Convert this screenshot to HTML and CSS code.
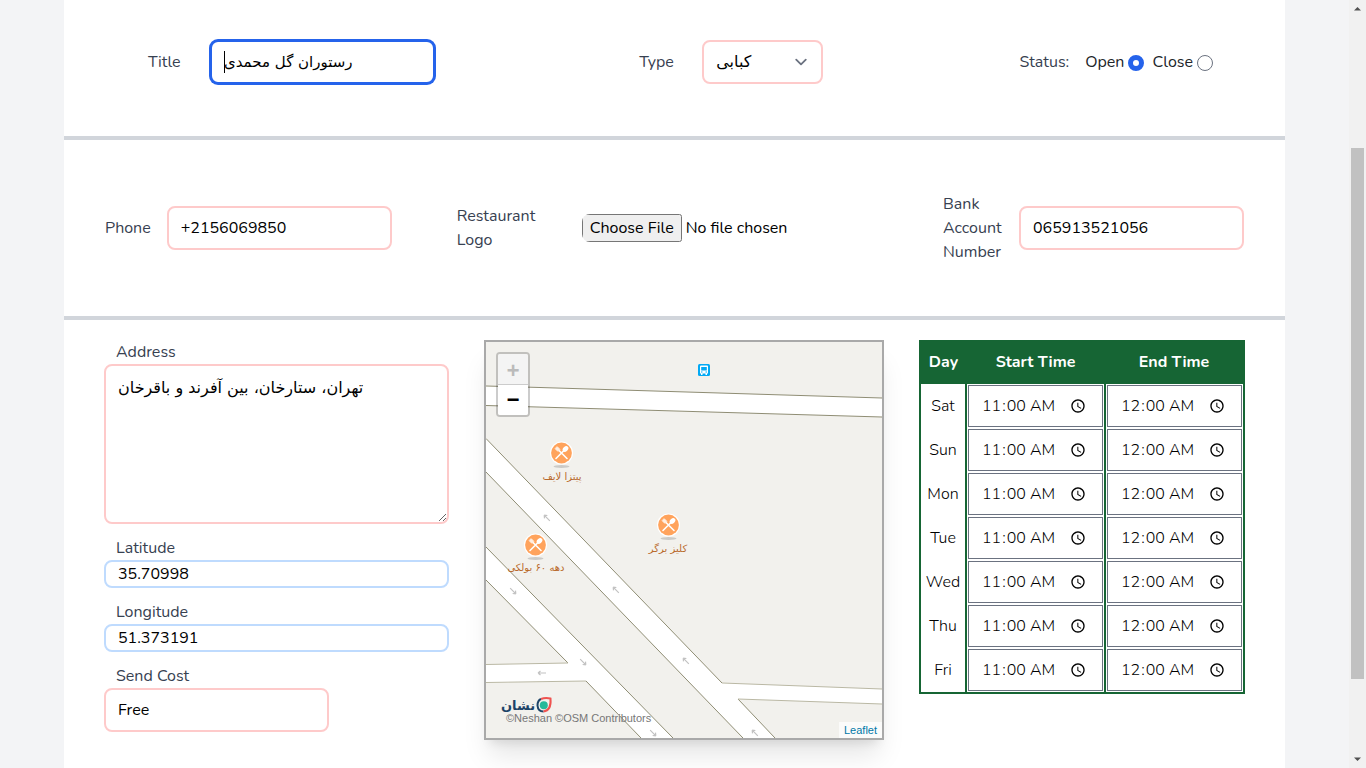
FILE: index.html
```html
<!DOCTYPE html>
<html lang="en">
<head>
<meta charset="utf-8">
<meta name="viewport" content="width=device-width, initial-scale=1">
<title>Restaurant settings</title>
<link rel="stylesheet" href="styles.css">
</head>
<body>
<div class="window">
  <main class="page">
    <form class="card">
      <section class="row row-main">
        <div class="field field-title">
          <label for="title">Title</label>
          <div class="input-wrap">
            <input class="input is-focused fa" id="title" type="text" value="رستوران گل محمدی">
            <span class="caret"></span>
          </div>
        </div>
        <div class="field field-type">
          <label for="type">Type</label>
          <select class="input select fa" id="type"><option>کبابی</option></select>
        </div>
        <div class="status" role="radiogroup" aria-labelledby="status-label">
          <span class="status-label" id="status-label">Status:</span>
          <label for="open">Open</label><input class="radio" type="radio" id="open" name="status" checked>
          <label class="close-label" for="close">Close</label><input class="radio" type="radio" id="close" name="status">
        </div>
      </section>

      <section class="row row-contact">
        <div class="field">
          <label for="phone">Phone</label>
          <input class="input" id="phone" type="text" value="+2156069850">
        </div>
        <div class="field field-logo">
          <label for="logo">Restaurant Logo</label>
          <input class="file" id="logo" type="file">
        </div>
        <div class="field field-bank">
          <label for="bank">Bank Account Number</label>
          <input class="input" id="bank" type="text" value="065913521056">
        </div>
      </section>

      <section class="row row-details">
        <div class="place">
          <div class="stack">
            <label for="address">Address</label>
            <textarea class="input area fa" id="address">تهران، ستارخان، بین آفرند و باقرخان</textarea>
          </div>
          <div class="stack">
            <label for="lat">Latitude</label>
            <input class="input coord" id="lat" type="text" value="35.70998">
          </div>
          <div class="stack">
            <label for="lng">Longitude</label>
            <input class="input coord" id="lng" type="text" value="51.373191">
          </div>
          <div class="stack">
            <label for="cost">Send Cost</label>
            <input class="input" id="cost" type="text" value="Free">
          </div>
        </div>

        <div class="map">
          <svg class="tiles" viewBox="486 342 396 396" role="img" aria-label="Map">
            <defs>
              <g id="arrow"><path d="M-4 0H4M-4 0l2.500-2M-4 0l2.500 2" fill="none" stroke="#c2c2c2" stroke-width="1.200"/></g>
              <g id="food">
                <ellipse cy="13.500" rx="8" ry="1.500" fill="#cbcac7"/>
                <circle r="11.500" fill="#fff"/>
                <circle r="10.400" fill="#ffa35c"/>
                <path d="M-3.500-3.500L5.500 5.500M3-3L-5.500 5.500" stroke="#fff" stroke-width="1.600" stroke-linecap="round"/>
                <ellipse cx="4" cy="-4" rx="2.300" ry="3.300" transform="rotate(45 4 -4)" fill="#fff"/>
                <path d="M-6.500-4.500L-3.500-1.500L-1.500-3.500L-4.500-6.500" fill="#ffe4cf"/>
                <path d="M-6.500-4.500L-3.500-1.500M-5.500-5.500L-2.500-2.500M-4.500-6.500L-1.500-3.500" stroke="#fff" stroke-width=".8"/>
              </g>
            </defs>
            <rect x="486" y="342" width="396" height="396" fill="#f2f1ed"/>
            <g fill="#fff">
              <path d="M486 386L540 387.500L882 398V417L486 405.500Z"/>
              <path d="M486 438.500L722 683L882 689V704L738 699L775 738H743L486 472Z"/>
              <path d="M486 547L673 738H641L586 681L486 682.500V664.500L568 663L486 580Z"/>
            </g>
            <g fill="none" stroke="#8f8d74" stroke-width="1">
              <path d="M486 386L540 387.500L882 398M486 405.500L882 417"/>
              <path d="M486 438.500L722 683M486 472L743 738M738 699L775 738"/>
              <path d="M486 547L673 738M486 580L568 663M586 681L641 738"/>
            </g>
            <path d="M722 683L882 689M738 699L882 704M486 664.500L568 663M486 682.500L586 681" fill="none" stroke="#bab8a4"/>
            <use href="#arrow" transform="translate(547 518) rotate(45)"/>
            <use href="#arrow" transform="translate(616 590) rotate(45)"/>
            <use href="#arrow" transform="translate(686 661) rotate(45)"/>
            <use href="#arrow" transform="translate(755 733) rotate(45)"/>
            <use href="#arrow" transform="translate(513 591) rotate(225)"/>
            <use href="#arrow" transform="translate(583 662) rotate(225)"/>
            <use href="#arrow" transform="translate(653 733) rotate(225)"/>
            <use href="#arrow" transform="translate(542 673)"/>
            <use href="#food" transform="translate(561.500 453)"/>
            <use href="#food" transform="translate(668.500 525)"/>
            <use href="#food" transform="translate(535.500 545)"/>
            <g transform="translate(698 364)">
              <rect width="12" height="12" rx="1.500" fill="#03a9f4"/>
              <path d="M3 1.500h6q1 0 1 1V9.500H9V11H7.500V9.500H4.500V11H3V9.500H2V2.500q0-1 1-1z" fill="#fff"/>
              <path d="M3.200 3h5.600v3.500H3.200zM3 7.500h1.500v1H3zM7.500 7.500H9v1H7.500z" fill="#03a9f4"/>
            </g>
            <g class="poi">
              <text x="562" y="480">پیتزا لایف</text>
              <text x="668" y="552">کلیز برگر</text>
              <text x="536" y="571">دهه ۶۰ بولکی</text>
            </g>
            <text class="brand" x="518" y="710">نشان</text>
            <path d="M536.500 709V702Q537 698.500 542 698.500H550.500V706Q550 711.500 543.500 711.500Q537 711.500 536.500 709Z" fill="#f1f1ed"/>
            <path d="M541 699Q537.500 700.500 537.500 705.500Q538 711.500 543.500 711.500" fill="none" stroke="#1d4468" stroke-width="2"/>
            <path d="M541 699Q545 697.500 550.500 698.500Q551.500 710.500 543.500 711.500" fill="none" stroke="#ef5350" stroke-width="2"/>
            <circle cx="543.800" cy="705.200" r="4" fill="#26b99a"/>
            <text class="copyright" x="506" y="722">©Neshan ©OSM Contributors</text>
          </svg>
          <div class="zoom">
            <button class="zoom-in" type="button" aria-label="Zoom in" disabled>+</button>
            <button type="button" aria-label="Zoom out">−</button>
          </div>
          <div class="attribution"><a href="#leaflet">Leaflet</a></div>
        </div>

        <table class="hours">
          <thead><tr><th class="day">Day</th><th>Start Time</th><th>End Time</th></tr></thead>
          <tbody>
            <tr><td>Sat</td><td><input type="time" aria-label="Sat start" value="11:00"></td><td><input type="time" aria-label="Sat end" value="00:00"></td></tr>
            <tr><td>Sun</td><td><input type="time" aria-label="Sun start" value="11:00"></td><td><input type="time" aria-label="Sun end" value="00:00"></td></tr>
            <tr><td>Mon</td><td><input type="time" aria-label="Mon start" value="11:00"></td><td><input type="time" aria-label="Mon end" value="00:00"></td></tr>
            <tr><td>Tue</td><td><input type="time" aria-label="Tue start" value="11:00"></td><td><input type="time" aria-label="Tue end" value="00:00"></td></tr>
            <tr><td>Wed</td><td><input type="time" aria-label="Wed start" value="11:00"></td><td><input type="time" aria-label="Wed end" value="00:00"></td></tr>
            <tr><td>Thu</td><td><input type="time" aria-label="Thu start" value="11:00"></td><td><input type="time" aria-label="Thu end" value="00:00"></td></tr>
            <tr><td>Fri</td><td><input type="time" aria-label="Fri start" value="11:00"></td><td><input type="time" aria-label="Fri end" value="00:00"></td></tr>
          </tbody>
        </table>
      </section>
    </form>
  </main>
  <div class="scrollbar" aria-hidden="true">
    <svg viewBox="0 0 17 17"><path d="M5 10.500L8.500 7L12 10.500Z" fill="#505050"/></svg>
    <div class="track"><div class="thumb"></div></div>
    <svg viewBox="0 0 17 17"><path d="M5 6.500L8.500 10L12 6.500Z" fill="#505050"/></svg>
  </div>
</div>
</body>
</html>
```
FILE: styles.css
```css
*,
*::before,
*::after {
  box-sizing: border-box;
}

body {
  margin: 0;
  background: #f3f4f6;
  color: #111827;
  font: 16px/24px Nunito, Lato, "DejaVu Sans", sans-serif;
}

input,
select,
textarea,
button {
  margin: 0;
  font: inherit;
  color: #000;
}

label,
.status-label {
  color: #374151;
}

.window {
  display: grid;
  grid-template-columns: minmax(0, 1fr) 17px;
  grid-template-rows: 100%;
  height: 100vh;
  overflow: hidden;
}

.page {
  display: flex;
  min-width: 0;
  padding: 0 64px;
}

.card {
  flex: 1;
  min-width: 0;
  background: #fff;
}

.row {
  display: flex;
  justify-content: space-between;
  padding: 0 40px;
}

.row-main {
  align-items: flex-start;
  padding: 40px 72px 52px 84px;
  border-bottom: 4px solid #d1d5db;
}

.row-contact {
  align-items: center;
  gap: 65px;
  padding: 52px 41px;
  border-bottom: 4px solid #d1d5db;
}

.row-details {
  align-items: flex-start;
  padding-top: 20px;
  padding-bottom: 60px;
}

.field {
  display: flex;
  align-items: center;
  gap: 16px;
}

.field-title {
  gap: 0;
  padding-right: 8px;
}

.field-title label {
  width: 62px;
}

.field-type {
  gap: 0;
}

.field-type label {
  width: 63px;
}

.field-logo {
  flex: 1;
  min-width: 0;
}

.field-logo label {
  width: 109px;
}

.field-logo .file {
  flex: 1;
  min-width: 0;
}

.field-bank label {
  width: 60px;
}

.input {
  display: block;
  width: 225px;
  height: 44px;
  padding: 8px 12px;
  border: 2px solid #fecaca;
  border-radius: 8px;
  background: #fff;
}

.fa {
  font-family: "DejaVu Sans", sans-serif;
}

.input-wrap {
  position: relative;
}

.is-focused {
  border-color: #2563eb;
  outline: none;
  box-shadow: 0 0 0 1px #2563eb;
  font-size: 15px;
}

.caret {
  position: absolute;
  top: 11px;
  left: 14px;
  width: 1px;
  height: 22px;
  background: #000;
}

.select {
  width: 121px;
  appearance: none;
  background: #fff url("data:image/svg+xml,%3Csvg xmlns='http://www.w3.org/2000/svg' fill='none' viewBox='0 0 20 20'%3E%3Cpath stroke='%236b7280' stroke-linecap='round' stroke-linejoin='round' stroke-width='1.5' d='M6 8l4 4 4-4'/%3E%3C/svg%3E") right 8px center / 24px no-repeat;
}

.status {
  display: flex;
  align-items: center;
  height: 44px;
}

.status label {
  color: #212529;
}

.status-label {
  margin-right: 16px;
}

.status .close-label {
  margin-left: 8px;
}

.radio {
  appearance: none;
  width: 16px;
  height: 16px;
  margin: 2px 0 0 4px;
  border: 1px solid #6b7280;
  border-radius: 50%;
  background: #fff;
}

.radio:checked {
  border: 5px solid #2563eb;
}

.file {
  border-radius: 8px;
}

.file::file-selector-button {
  font: inherit;
}

.place {
  display: flex;
  flex-direction: column;
  gap: 12px;
  width: 345px;
}

.stack label {
  display: block;
  padding-left: 12px;
}

.area {
  width: 100%;
  height: 160px;
  line-height: 28px;
  resize: vertical;
}

.coord {
  width: 100%;
  height: 28px;
  padding: 0 12px;
  border-color: #bfdbfe;
}

.map {
  position: relative;
  width: 400px;
  border: 2px solid #a9a9a9;
  box-shadow: 0 20px 25px -5px rgba(0, 0, 0, 0.1), 0 8px 10px -6px rgba(0, 0, 0, 0.1);
}

.tiles {
  display: block;
  width: 100%;
}

.poi {
  fill: #b9692b;
  font: 10px "DejaVu Sans", sans-serif;
  text-anchor: middle;
}

.brand {
  fill: #1d4468;
  font: bold 13px "DejaVu Sans", sans-serif;
  text-anchor: middle;
}

.copyright {
  fill: #777;
  font: 11px "Liberation Sans", Arial, sans-serif;
}

.zoom {
  position: absolute;
  top: 10px;
  left: 10px;
  border: 2px solid rgba(0, 0, 0, 0.2);
  border-radius: 4px;
  background-clip: padding-box;
}

.zoom button {
  display: block;
  width: 30px;
  height: 30px;
  padding: 2px 0 0;
  border: 0;
  border-radius: 0 0 2px 2px;
  background: #fff;
  font: bold 22px/30px "Liberation Mono", monospace;
}

.zoom .zoom-in {
  height: 31px;
  padding-top: 4px;
  border-bottom: 1px solid #ccc;
  border-radius: 2px 2px 0 0;
  background: #f4f4f4;
  color: #bbb;
}

.attribution {
  position: absolute;
  right: 0;
  bottom: 0;
  padding: 0 5px;
  background: rgba(255, 255, 255, 0.7);
  font: 11px/16px "Liberation Sans", Arial, sans-serif;
}

.attribution a {
  color: #0078a8;
  text-decoration: none;
}

.hours {
  width: 326px;
  table-layout: fixed;
  border: 2px solid #166534;
  border-collapse: collapse;
  color: #000;
  font-weight: 300;
}

.hours th {
  height: 43px;
  padding: 0 0 2px;
  background: #166534;
  color: #fff;
  font-weight: 700;
}

.hours .day {
  width: 46px;
}

.hours td {
  height: 44px;
  padding: 1px;
  border: solid #166534;
  border-width: 0 2px;
  text-align: center;
}

.hours input {
  display: block;
  width: 100%;
  height: 42px;
  padding: 8px 12px;
  border: 1px solid #6b7280;
  background: #fff;
}

.scrollbar {
  display: flex;
  flex-direction: column;
  background: #f1f1f1;
}

.scrollbar svg {
  width: 17px;
  height: 17px;
}

.track {
  flex: 1;
  padding: 131px 2px 0;
}

.thumb {
  height: 531px;
  background: #c1c1c1;
}
```
